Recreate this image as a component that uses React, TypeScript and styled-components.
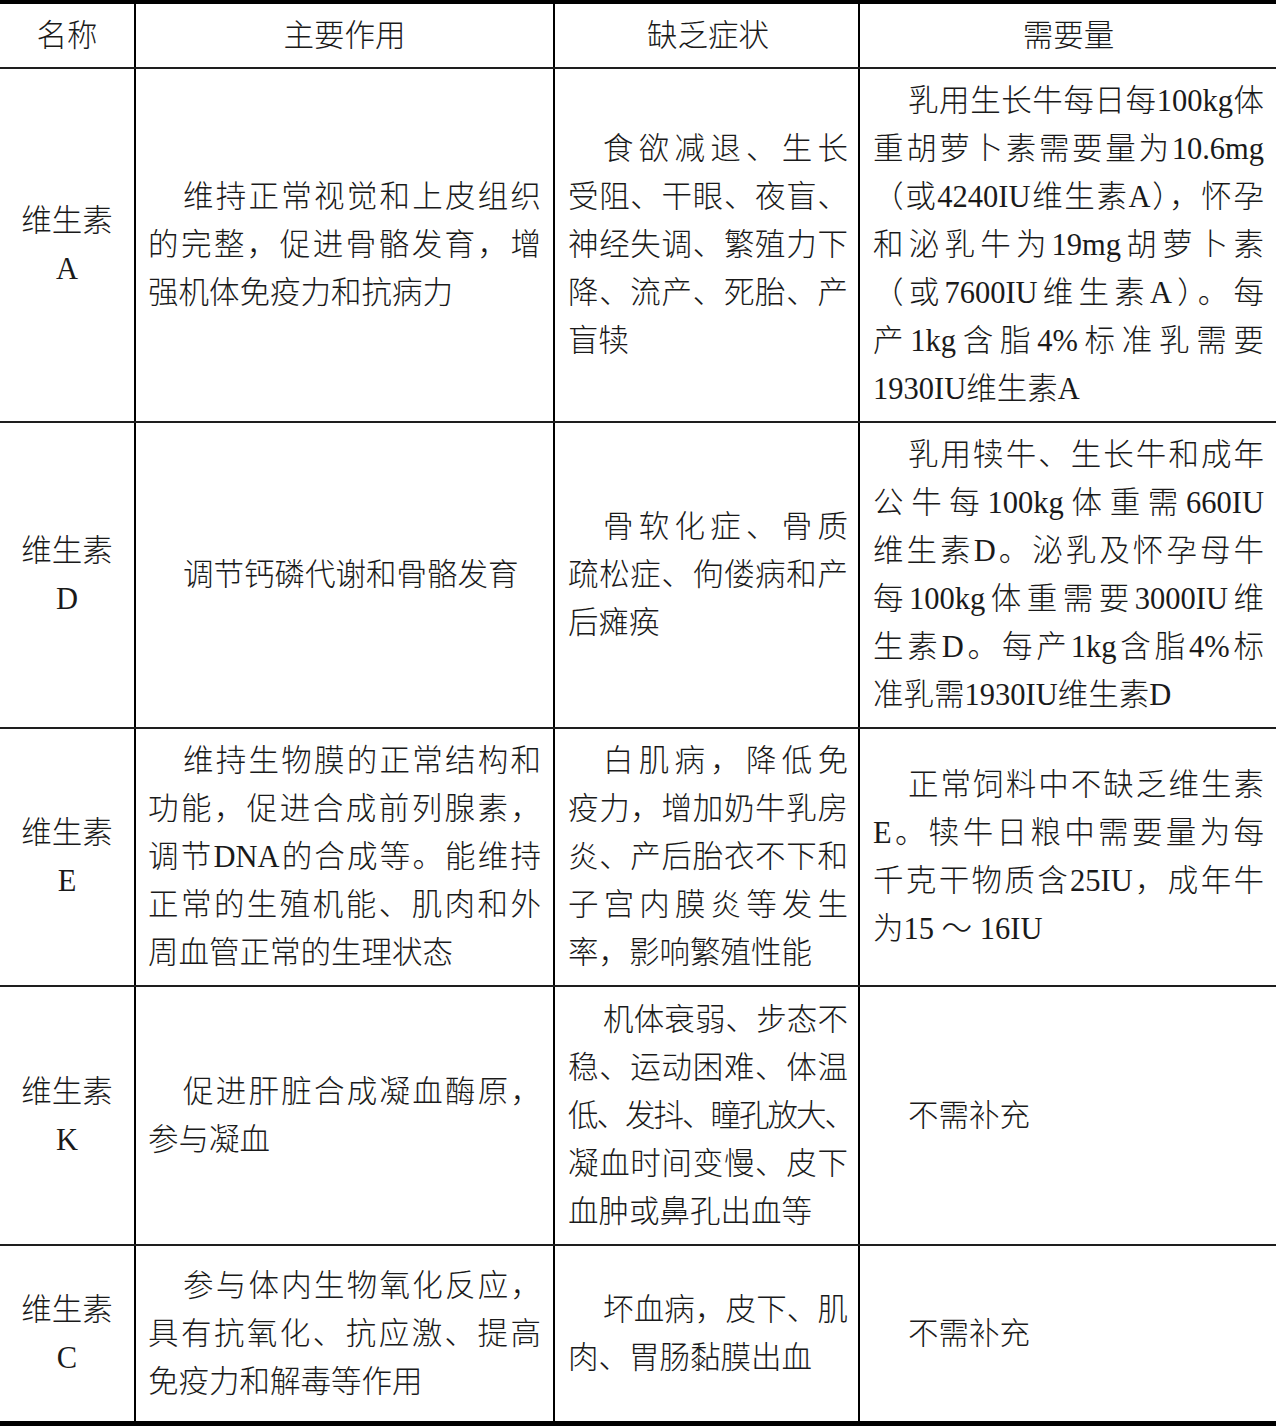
import React from "react";
import styled, { createGlobalStyle } from "styled-components";

const Global = createGlobalStyle`
  html, body { margin: 0; padding: 0; background: #ffffff; }
  body {
    font-family: "Liberation Serif", "Noto Sans CJK SC", serif;
    color: #1a1a1a;
  }
`;

const Table = styled.div`
  width: 1276px;
  box-sizing: border-box;
  border-top: 4px solid #000;
  border-bottom: 5px solid #000;
  display: flex;
  flex-direction: column;
`;

const Row = styled.div<{ $h: number; $last?: boolean }>`
  display: grid;
  grid-template-columns: 136px 419px 305px 1fr;
  height: ${(p) => p.$h}px;
  box-sizing: border-box;
  border-bottom: ${(p) => (p.$last ? "none" : "2px solid #1e1e1e")};
`;

const Cell = styled.div<{ $padL: number; $padR: number; $center?: boolean; $end?: boolean }>`
  display: flex;
  flex-direction: column;
  justify-content: center;
  box-sizing: border-box;
  padding: 0 ${(p) => p.$padR}px 0 ${(p) => p.$padL}px;
  border-right: ${(p) => (p.$end ? "none" : "2px solid #000")};
  text-align: ${(p) => (p.$center ? "center" : "left")};
  min-width: 0;
`;

const Line = styled.div<{ $indent?: boolean; $justify?: boolean; $center?: boolean; $squeeze?: boolean }>`
  font-size: 30.5px;
  font-weight: 300;
  line-height: 48px;
  white-space: nowrap;
  text-indent: ${(p) => (p.$indent ? "35px" : "0")};
  text-align: ${(p) => (p.$center ? "center" : p.$justify ? "justify" : "left")};
  text-align-last: ${(p) => (p.$center ? "center" : p.$justify ? "justify" : "left")};
  text-justify: inter-character;
  letter-spacing: ${(p) => (p.$squeeze ? "-2px" : "0")};
`;

type CellData = string[];
type RowData = { h: number; cells: CellData[]; header?: boolean };

const rows: RowData[] = [
  { h: 65, header: true, cells: [["名称"], ["主要作用"], ["缺乏症状"], ["需要量"]] },
  {
    h: 354,
    cells: [
      ["维生素", "A"],
      ["维持正常视觉和上皮组织", "的完整，促进骨骼发育，增", "强机体免疫力和抗病力"],
      ["食欲减退、生长", "受阻、干眼、夜盲、", "神经失调、繁殖力下", "降、流产、死胎、产", "盲犊"],
      [
        "乳用生长牛每日每100kg体",
        "重胡萝卜素需要量为10.6mg",
        "（或4240IU维生素A），怀孕",
        "和泌乳牛为19mg胡萝卜素",
        "（或7600IU维生素A）。每",
        "产1kg含脂4%标准乳需要",
        "1930IU维生素A",
      ],
    ],
  },
  {
    h: 306,
    cells: [
      ["维生素", "D"],
      ["调节钙磷代谢和骨骼发育"],
      ["骨软化症、骨质", "疏松症、佝偻病和产", "后瘫痪"],
      [
        "乳用犊牛、生长牛和成年",
        "公牛每100kg体重需660IU",
        "维生素D。泌乳及怀孕母牛",
        "每100kg体重需要3000IU维",
        "生素D。每产1kg含脂4%标",
        "准乳需1930IU维生素D",
      ],
    ],
  },
  {
    h: 258,
    cells: [
      ["维生素", "E"],
      [
        "维持生物膜的正常结构和",
        "功能，促进合成前列腺素，",
        "调节DNA的合成等。能维持",
        "正常的生殖机能、肌肉和外",
        "周血管正常的生理状态",
      ],
      ["白肌病，降低免", "疫力，增加奶牛乳房", "炎、产后胎衣不下和", "子宫内膜炎等发生", "率，影响繁殖性能"],
      ["正常饲料中不缺乏维生素", "E。犊牛日粮中需要量为每", "千克干物质含25IU，成年牛", "为15 ～ 16IU"],
    ],
  },
  {
    h: 259,
    cells: [
      ["维生素", "K"],
      ["促进肝脏合成凝血酶原，", "参与凝血"],
      ["机体衰弱、步态不", "稳、运动困难、体温", "低、发抖、瞳孔放大、", "凝血时间变慢、皮下", "血肿或鼻孔出血等"],
      ["不需补充"],
    ],
  },
  {
    h: 175,
    cells: [
      ["维生素", "C"],
      ["参与体内生物氧化反应，", "具有抗氧化、抗应激、提高", "免疫力和解毒等作用"],
      ["坏血病，皮下、肌", "肉、胃肠黏膜出血"],
      ["不需补充"],
    ],
  },
];

const pads: [number, number][] = [
  [0, 0],
  [12, 12],
  [13, 10],
  [13, 12],
];

export default function App() {
  return (
    <>
      <Global />
      <Table>
        {rows.map((row, ri) => (
          <Row key={ri} $h={row.h} $last={ri === rows.length - 1}>
            {row.cells.map((lines, ci) => {
              const center = row.header || ci === 0;
              return (
                <Cell
                  key={ci}
                  $padL={pads[ci][0]}
                  $padR={pads[ci][1]}
                  $center={center}
                  $end={ci === 3}
                >
                  {lines.map((t, li) => (
                    <Line
                      key={li}
                      $center={center}
                      $indent={!center && li === 0}
                      $justify={!center && li < lines.length - 1}
                      $squeeze={t.length >= 10 && ci === 2}
                    >
                      {t}
                    </Line>
                  ))}
                </Cell>
              );
            })}
          </Row>
        ))}
      </Table>
    </>
  );
}
